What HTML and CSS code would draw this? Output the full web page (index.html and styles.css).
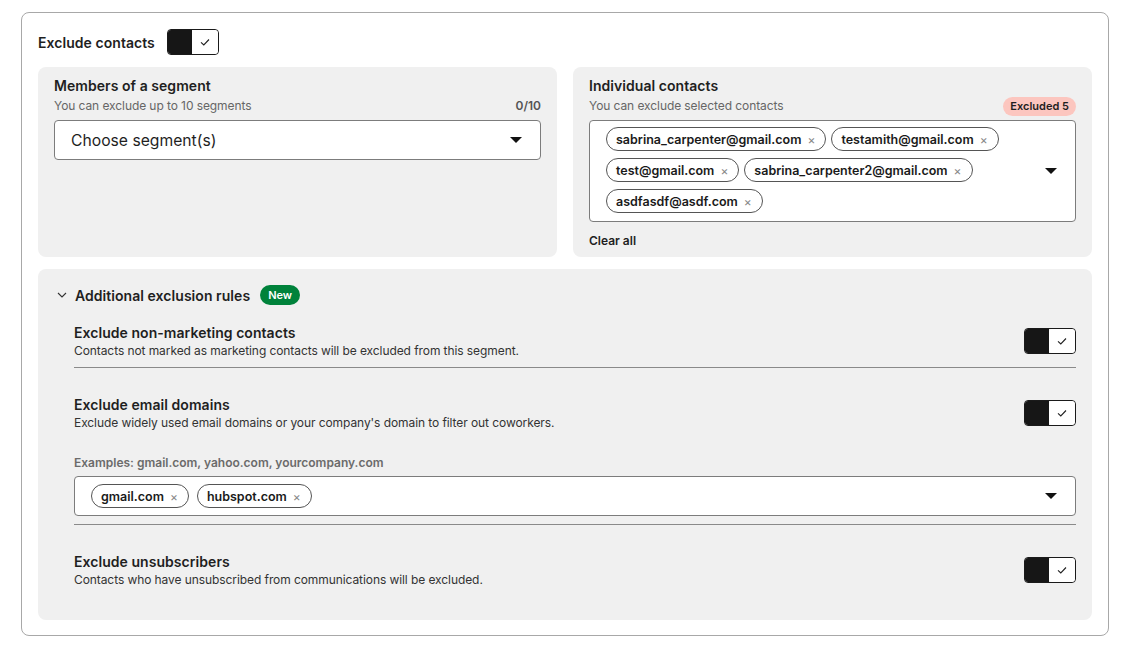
FILE: index.html
```html
<!DOCTYPE html>
<html lang="en">
<head>
<meta charset="utf-8">
<title>Exclude contacts</title>
<link rel="stylesheet" href="styles.css">
</head>
<body>
<div class="card">
  <div class="card-head">
    <span class="h-main">Exclude contacts</span>
    <span class="toggle"><span class="toggle-on"></span><span class="toggle-knob"><svg viewBox="0 0 12 12" width="12" height="12"><path d="M2 6.3 L4.8 9 L10 3.5" fill="none" stroke="#222" stroke-width="1.1"/></svg></span></span>
  </div>

  <div class="two-col">
    <section class="panel">
      <div class="panel-title">Members of a segment</div>
      <div class="sub-row">
        <span class="sub">You can exclude up to 10 segments</span>
        <span class="count">0/10</span>
      </div>
      <div class="select">
        <span class="placeholder">Choose segment(s)</span>
        <span class="caret"></span>
      </div>
    </section>

    <section class="panel">
      <div class="panel-title">Individual contacts</div>
      <div class="sub-row">
        <span class="sub">You can exclude selected contacts</span>
        <span class="badge-red">Excluded 5</span>
      </div>
      <div class="select multi">
        <div class="tags">
          <span class="tag">sabrina_carpenter@gmail.com<span class="x">×</span></span>
          <span class="tag">testamith@gmail.com<span class="x">×</span></span>
          <span class="tag">test@gmail.com<span class="x">×</span></span>
          <span class="tag">sabrina_carpenter2@gmail.com<span class="x">×</span></span>
          <span class="tag">asdfasdf@asdf.com<span class="x">×</span></span>
        </div>
        <span class="caret"></span>
      </div>
      <div class="clear">Clear all</div>
    </section>
  </div>

  <section class="panel rules">
    <div class="rules-head">
      <svg class="chev" viewBox="0 0 10 6" width="10" height="6"><path d="M1 1 L5 5 L9 1" fill="none" stroke="#333" stroke-width="1.1"/></svg>
      <span class="h-main">Additional exclusion rules</span>
      <span class="badge-green">New</span>
    </div>

    <div class="rule">
      <div class="rule-row">
        <div>
          <div class="rule-title">Exclude non-marketing contacts</div>
          <div class="rule-desc">Contacts not marked as marketing contacts will be excluded from this segment.</div>
        </div>
        <span class="toggle"><span class="toggle-on"></span><span class="toggle-knob"><svg viewBox="0 0 12 12" width="12" height="12"><path d="M2 6.3 L4.8 9 L10 3.5" fill="none" stroke="#222" stroke-width="1.1"/></svg></span></span>
      </div>
    </div>

    <div class="rule">
      <div class="rule-row">
        <div>
          <div class="rule-title">Exclude email domains</div>
          <div class="rule-desc">Exclude widely used email domains or your company's domain to filter out coworkers.</div>
        </div>
        <span class="toggle"><span class="toggle-on"></span><span class="toggle-knob"><svg viewBox="0 0 12 12" width="12" height="12"><path d="M2 6.3 L4.8 9 L10 3.5" fill="none" stroke="#222" stroke-width="1.1"/></svg></span></span>
      </div>
      <div class="examples">Examples: gmail.com, yahoo.com, yourcompany.com</div>
      <div class="select domains">
        <div class="tags">
          <span class="tag">gmail.com<span class="x">×</span></span>
          <span class="tag">hubspot.com<span class="x">×</span></span>
        </div>
        <span class="caret"></span>
      </div>
    </div>

    <div class="rule last">
      <div class="rule-row">
        <div>
          <div class="rule-title">Exclude unsubscribers</div>
          <div class="rule-desc">Contacts who have unsubscribed from communications will be excluded.</div>
        </div>
        <span class="toggle"><span class="toggle-on"></span><span class="toggle-knob"><svg viewBox="0 0 12 12" width="12" height="12"><path d="M2 6.3 L4.8 9 L10 3.5" fill="none" stroke="#222" stroke-width="1.1"/></svg></span></span>
      </div>
    </div>
  </section>
</div>
</body>
</html>
```

FILE: styles.css
```css
* { box-sizing: border-box; }

body {
  margin: 0;
  background: #fff;
  font-family: Inter, "Noto Sans", sans-serif;
  color: #1f1f1f;
  padding: 12px 13px 16px 21px;
}

.card {
  width: 1088px;
  border: 1px solid #a8a8a8;
  border-radius: 8px;
  padding: 16px 16px 15px 16px;
}

.card-head {
  display: flex;
  align-items: center;
  gap: 12px;
  height: 26px;
  margin-bottom: 12px;
}

.h-main {
  font-size: 14px;
  font-weight: 600;
  letter-spacing: 0.05px;
}

.toggle {
  display: inline-flex;
  width: 52px;
  height: 26px;
  border: 1px solid #1a1a1a;
  border-radius: 4px;
  overflow: hidden;
  flex: none;
}
.toggle-on { flex: 1; background: #161616; }
.toggle-knob {
  width: 26px;
  background: #fff;
  border-radius: 3px;
  display: flex;
  align-items: center;
  justify-content: center;
}

.two-col {
  display: grid;
  grid-template-columns: 1fr 1fr;
  gap: 16px;
  margin-bottom: 12px;
}

.panel {
  background: #f0f0f0;
  border-radius: 8px;
  padding: 10px 16px 8px;
}

.panel-title {
  font-size: 14px;
  font-weight: 600;
  line-height: 18px;
  margin-bottom: 1px;
  letter-spacing: 0.05px;
}

.sub-row {
  display: flex;
  justify-content: space-between;
  align-items: center;
  height: 20px;
  margin-bottom: 4px;
}
.sub { font-size: 12px; color: #666; letter-spacing: -0.08px; margin-top: -2px; }
.count { font-size: 12px; font-weight: 600; color: #555; margin-top: -2px; }

.select {
  background: #fff;
  border: 1px solid #7c7c7c;
  border-radius: 4px;
  height: 40px;
  display: flex;
  align-items: center;
  padding: 0 18px 0 16px;
}
.placeholder { flex: 1; font-size: 15.7px; color: #1f1f1f; }
.caret {
  width: 0; height: 0;
  border-left: 6px solid transparent;
  border-right: 6px solid transparent;
  border-top: 6px solid #111;
  flex: none;
}

.badge-red {
  background: #fcc6bf;
  border-radius: 10px;
  font-size: 11px;
  font-weight: 600;
  padding: 0 7px;
  line-height: 19px;
  margin-top: 1px;
}

.multi {
  height: 102px;
  align-items: center;
  padding: 6px 18px 6px 16px;
}
.tags {
  flex: 1;
  display: flex;
  flex-wrap: wrap;
  gap: 7px 5px;
  align-content: flex-start;
  align-self: flex-start;
}
.tag {
  display: inline-flex;
  align-items: center;
  height: 24px;
  border: 1px solid #555;
  border-radius: 12px;
  padding: 0 10px 0 9px;
  font-size: 12.5px;
  font-weight: 600;
  color: #1a1a1a;
  background: #fff;
}
.tag .x {
  margin-left: 6px;
  font-size: 12px;
  font-weight: 400;
  color: #888;
}

.clear {
  font-size: 12px;
  font-weight: 600;
  margin-top: 11px;
  line-height: 16px;
}

.rules { padding: 16px 16px 32px 16px; }
.rules-head {
  display: flex;
  align-items: center;
  height: 20px;
  gap: 8px;
  margin-bottom: 18px;
}
.chev { margin-left: 3px; }
.badge-green {
  background: #00823b;
  color: #fff;
  font-size: 11px;
  font-weight: 600;
  border-radius: 10px;
  padding: 0 8px;
  line-height: 20px;
  margin-left: 2px;
}

.rule {
  margin-left: 20px;
  border-bottom: 1px solid #8a8a8a;
  padding-bottom: 8px;
  margin-bottom: 27px;
}
.rule.last { border-bottom: none; margin-bottom: 0; padding-bottom: 0; }

.rule-row {
  display: flex;
  align-items: center;
  justify-content: space-between;
}
.rule-title { font-size: 14px; font-weight: 600; line-height: 20px; letter-spacing: 0.05px; }
.rule-desc { font-size: 12px; color: #333; line-height: 16px; letter-spacing: -0.08px; }

.examples {
  font-size: 12px;
  font-weight: 600;
  color: #6b6b6b;
  margin-top: 24px;
  margin-bottom: 6px;
}
.domains { padding: 0 18px 0 16px; }
.domains .tags { align-self: center; gap: 8px; }
```
